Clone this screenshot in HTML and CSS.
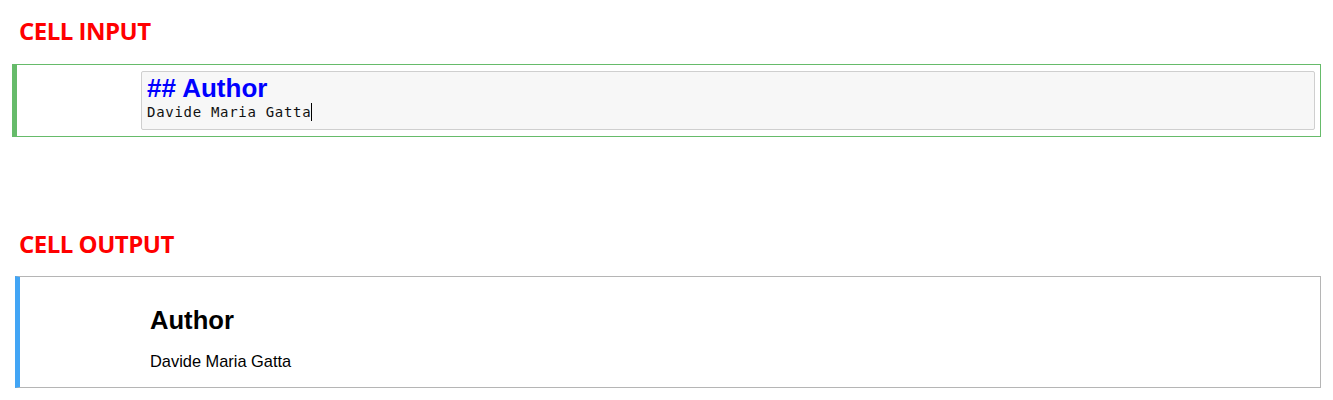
FILE: index.html
```html
<!DOCTYPE html>
<html>
<head>
<meta charset="utf-8">
<link rel="stylesheet" href="styles.css">
</head>
<body>
  <div class="label label-input">CELL INPUT</div>
  <div class="cell cell-input">
    <div class="editor">
      <div class="md-heading">## Author</div>
      <div class="md-line">Davide Maria Gatta<span class="caret"></span></div>
    </div>
  </div>
  <div class="label label-output">CELL OUTPUT</div>
  <div class="cell cell-output">
    <h2 class="out-heading">Author</h2>
    <p class="out-text">Davide Maria Gatta</p>
  </div>
</body>
</html>
```

FILE: styles.css
```css
html, body {
  margin: 0;
  padding: 0;
  background: #ffffff;
}
body {
  width: 1333px;
  height: 400px;
  overflow: hidden;
}
.label {
  font-family: "Open Sans", "Liberation Sans", sans-serif;
  font-weight: 700;
  font-size: 24px;
  line-height: 24px;
  height: 24px;
  color: #ff0000;
  margin-left: 19px;
  letter-spacing: -0.5px;
}
.label-input {
  padding-top: 19px;
  margin-bottom: 21px;
}
.label-output {
  margin-top: 95px;
  margin-bottom: 20px;
}
.cell {
  box-sizing: border-box;
}
.cell-input {
  margin-left: 12px;
  width: 1309px;
  border: 1px solid #66bb6a;
  border-left: 5px solid #66bb6a;
  padding: 6px 5px 6px 124px;
}
.editor {
  border: 1px solid #cfcfcf;
  border-radius: 2px;
  background: #f7f7f7;
  padding: 3px 5px 7px 5px;
}
.md-heading {
  font-family: "Liberation Sans", Arial, sans-serif;
  font-weight: 700;
  font-size: 26px;
  line-height: 27px;
  color: #0000ff;
}
.md-line {
  font-family: "DejaVu Sans Mono", "Liberation Mono", monospace;
  font-size: 14px;
  line-height: 20px;
  letter-spacing: 0.7px;
  color: #111111;
  white-space: pre;
}
.caret {
  display: inline-block;
  width: 0;
  height: 18px;
  border-left: 1px solid #000000;
  vertical-align: -4px;
  margin-left: -0.7px;
}
.cell-output {
  margin-left: 15px;
  width: 1306px;
  border: 1px solid #b5b5b5;
  border-left: 5px solid #42a5f5;
  padding: 30px 10px 16px 130px;
}
.out-heading {
  margin: 0;
  font-family: "Liberation Sans", Arial, sans-serif;
  font-weight: 700;
  font-size: 25.6px;
  line-height: 27px;
  color: #000000;
}
.out-text {
  margin: 17px 0 0 0;
  font-family: "Liberation Sans", Arial, sans-serif;
  font-size: 16.4px;
  line-height: 20px;
  color: #000000;
}
```
